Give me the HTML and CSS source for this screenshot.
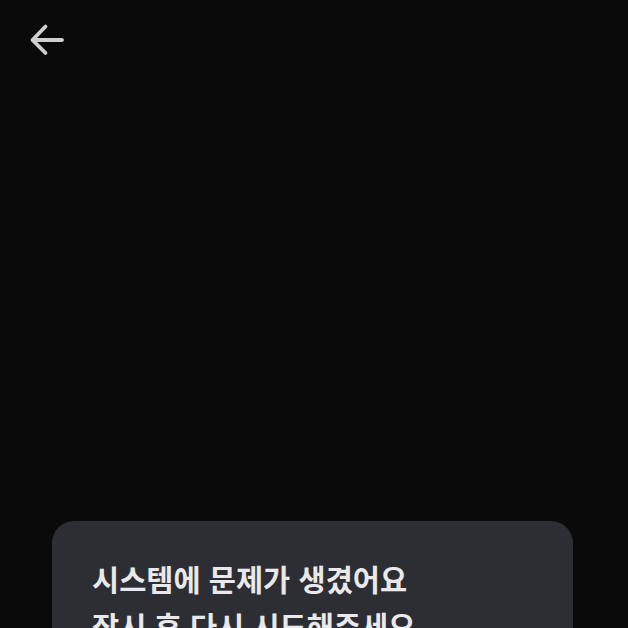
FILE: index.html
```html
<!DOCTYPE html>
<html lang="ko">
<head>
<meta charset="utf-8">
<link rel="stylesheet" href="styles.css">
</head>
<body>
<div class="screen">
  <header class="topbar">
    <button class="back" aria-label="뒤로">
      <svg width="40" height="40" viewBox="0 0 40 40" fill="none">
        <path d="M36 20H6.5M19.5 6.5L6.5 20l13 13" stroke="#cfcfcf" stroke-width="3.8" stroke-linecap="round" stroke-linejoin="round"/>
      </svg>
    </button>
  </header>
  <main class="content">
    <section class="card">
      <p class="msg">시스템에 문제가 생겼어요<br>잠시 후 다시 시도해주세요</p>
    </section>
  </main>
</div>
</body>
</html>
```

FILE: styles.css
```css
html, body {
  margin: 0;
  padding: 0;
  background: #0a0a0a;
}
.screen {
  width: 628px;
  height: 628px;
  overflow: hidden;
  display: flex;
  flex-direction: column;
  font-family: "Noto Sans CJK KR", "Noto Sans", sans-serif;
}
.topbar {
  height: 80px;
  display: flex;
  align-items: center;
  padding-left: 26px;
  flex-shrink: 0;
}
.back {
  width: 40px;
  height: 40px;
  padding: 0;
  border: 0;
  background: none;
  display: flex;
}
.content {
  padding: 441px 55px 0 52px;
  flex-shrink: 0;
}
.card {
  background: #2d2e33;
  border-radius: 22px;
  padding: 34px 40px 40px;
}
.msg {
  margin: 0;
  color: #e9e9eb;
  font-size: 29.5px;
  font-weight: 700;
  line-height: 47px;
}
```
